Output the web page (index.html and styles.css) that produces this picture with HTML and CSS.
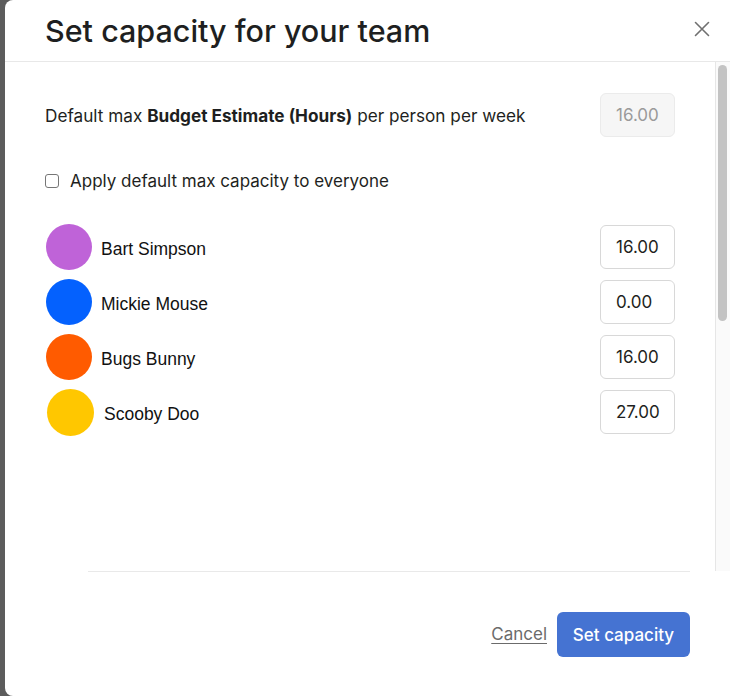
FILE: index.html
```html
<!DOCTYPE html>
<html lang="en">
<head>
<meta charset="utf-8">
<title>Set capacity for your team</title>
<link rel="stylesheet" href="styles.css">
</head>
<body>
<div class="modal">
  <header class="modal-header">
    <h1 class="modal-title">Set capacity for your team</h1>
    <button class="close" aria-label="Close">
      <svg width="16" height="16" viewBox="0 0 16 16"><path d="M1.5 1.5 L14.5 14.5 M14.5 1.5 L1.5 14.5" stroke="#707070" stroke-width="1.6" fill="none" stroke-linecap="round"/></svg>
    </button>
  </header>
  <div class="modal-body">
    <div class="content">
      <div class="default-row">
        <span class="default-label">Default max <b>Budget Estimate (Hours)</b> per person per week</span>
        <input class="hours disabled" type="text" value="16.00" disabled>
      </div>
      <label class="apply-row">
        <input type="checkbox" class="check">
        <span>Apply default max capacity to everyone</span>
      </label>
      <ul class="people">
        <li class="person">
          <span class="avatar purple"></span>
          <span class="name">Bart Simpson</span>
          <input class="hours" type="text" value="16.00">
        </li>
        <li class="person">
          <span class="avatar blue"></span>
          <span class="name">Mickie Mouse</span>
          <input class="hours" type="text" value="0.00">
        </li>
        <li class="person">
          <span class="avatar orange"></span>
          <span class="name">Bugs Bunny</span>
          <input class="hours" type="text" value="16.00">
        </li>
        <li class="person scooby">
          <span class="avatar yellow"></span>
          <span class="name">Scooby Doo</span>
          <input class="hours" type="text" value="27.00">
        </li>
      </ul>
    </div>
    <div class="scroll-track"><div class="scroll-thumb"></div></div>
  </div>
  <footer class="modal-footer">
    <a class="cancel" href="#">Cancel</a>
    <button class="primary">Set capacity</button>
  </footer>
</div>
</body>
</html>
```
FILE: styles.css
```css
* { box-sizing: border-box; }
html, body { margin: 0; padding: 0; }
body {
  background: #5c5c5c;
  width: 730px;
  height: 696px;
  overflow: hidden;
  font-family: Inter, "Noto Sans", sans-serif;
  color: #1e1f21;
}
.modal {
  margin-left: 5px;
  height: 696px;
  background: #fff;
  border-radius: 8px 0 0 8px;
  display: flex;
  flex-direction: column;
}
.modal-header {
  height: 62px;
  flex: none;
  border-bottom: 1px solid #e8e8e8;
  display: flex;
  align-items: center;
  justify-content: space-between;
  padding: 0 20px 0 40px;
}
.modal-title {
  margin: 0;
  font-size: 30.5px;
  font-weight: 500;
  letter-spacing: 0;
  color: #1e1f21;
  padding-bottom: 0;
}
.close {
  border: 0;
  background: none;
  padding: 0;
  width: 16px;
  height: 16px;
  margin-bottom: 4px;
  display: flex;
}
.modal-body {
  height: 509px;
  flex: none;
  display: flex;
}
.content {
  flex: 1;
  padding: 31px 40px 0 40px;
}
.default-row {
  display: flex;
  align-items: center;
  justify-content: space-between;
  height: 44px;
}
.default-label {
  font-size: 17.2px;
  color: #1e1f21;
}
.default-label b { font-weight: 700; }
.hours {
  width: 75px;
  height: 44px;
  border: 1px solid #d8d8d8;
  border-radius: 6px;
  padding: 0 0 0 15px;
  font-family: Inter, "Noto Sans", sans-serif;
  font-size: 17px;
  color: #1e1f21;
  background: #fff;
  outline: none;
}
.hours.disabled {
  background: #f6f6f6;
  border-color: #ebebeb;
  color: #9a9a9a;
}
.apply-row {
  display: flex;
  align-items: center;
  gap: 11px;
  margin-top: 34px;
  height: 20px;
  font-size: 17px;
  color: #1e1f21;
}
.check {
  appearance: none;
  -webkit-appearance: none;
  margin: 0;
  width: 14px;
  height: 14px;
  border: 1px solid #767676;
  border-radius: 3px;
  background: #fff;
}
.people {
  list-style: none;
  margin: 34px 0 0 0;
  padding: 0;
  display: flex;
  flex-direction: column;
  gap: 11px;
}
.person {
  display: flex;
  align-items: center;
  height: 44px;
}
.avatar {
  width: 46px;
  height: 46px;
  border-radius: 50%;
  flex: none;
  margin-left: 1px;
}
.purple { background: #bf63d8; }
.blue { background: #0461fe; }
.orange { background: #ff5b00; }
.yellow { background: #ffc700; }
.scooby .avatar { margin-left: 2px; width: 47px; height: 47px; }
.scooby .name { margin-left: 10px; }
.name {
  flex: 1;
  margin-left: 9px;
  padding-top: 4px;
  font-family: "Liberation Sans", Arial, sans-serif;
  font-size: 17.5px;
  color: #111;
}
.scroll-track {
  width: 15px;
  flex: none;
  background: #fafafa;
  border-left: 1px solid #e6e6e6;
  padding: 3px 0 0 2px;
}
.scroll-thumb {
  width: 9px;
  height: 256px;
  border-radius: 5px;
  background: #c3c3c3;
}
.modal-footer {
  flex: 1;
  margin: 0 40px 0 83px;
  border-top: 1px solid #e9e9e9;
  display: flex;
  justify-content: flex-end;
  align-items: flex-start;
  gap: 10px;
  padding-top: 40px;
}
.cancel {
  font-size: 17px;
  color: #6b6b6b;
  text-decoration: underline;
  text-underline-offset: 3px;
  line-height: 45px;
}
.primary {
  height: 45px;
  width: 133px;
  border: 0;
  border-radius: 6px;
  background: #4573d2;
  color: #fff;
  font-family: Inter, "Noto Sans", sans-serif;
  font-size: 17px;
  font-weight: 500;
  padding: 0;
}
```
